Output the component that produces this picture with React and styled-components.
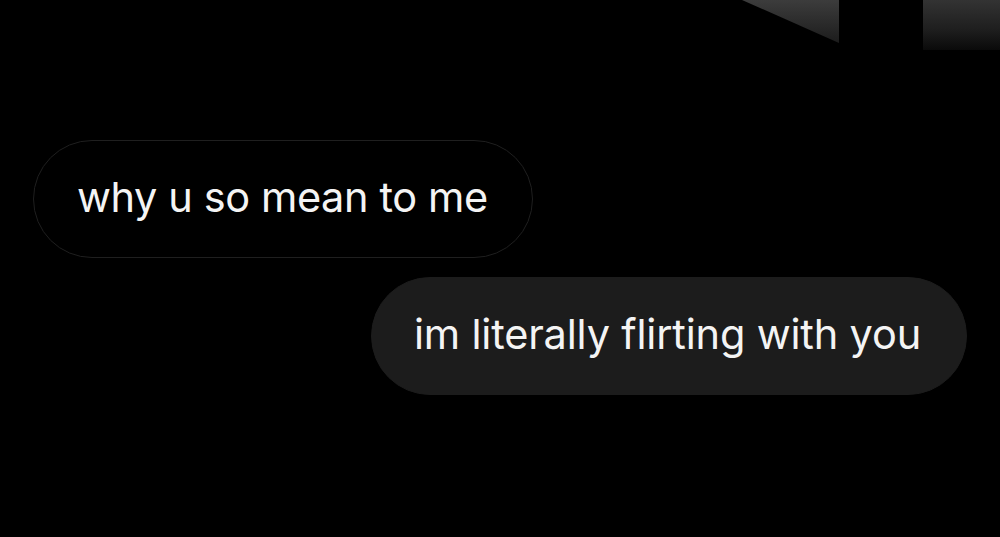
import styled, { createGlobalStyle } from "styled-components"

const GlobalStyle = createGlobalStyle`
  html, body {
    margin: 0;
    padding: 0;
    background: #000;
  }
`

const Screen = styled.div`
  width: 1000px;
  height: 537px;
  background: #000;
  overflow: hidden;
  display: flex;
  flex-direction: column;
  font-family: Inter, "Liberation Sans", sans-serif;
`

const TopStrip = styled.div`
  height: 50px;
  display: flex;
  justify-content: flex-end;
  align-items: flex-start;
  gap: 83px;
`

const Corner = styled.svg`
  display: block;
  flex: none;
`

const Tile = styled.div`
  width: 77px;
  height: 50px;
  flex: none;
  background: linear-gradient(180deg, #333 0%, #1e1e1e 60%, #0a0a0a 100%);
`

const Thread = styled.div`
  display: flex;
  flex-direction: column;
  gap: 19px;
  padding: 90px 33px 0 33px;
`

const Bubble = styled.div`
  align-self: ${(p) => (p.$mine ? "flex-end" : "flex-start")};
  height: 118px;
  box-sizing: border-box;
  border-radius: 59px;
  padding: ${(p) => (p.$mine ? "0 45px 4px 42px" : "0 44px 4px 43px")};
  display: flex;
  align-items: center;
  background: ${(p) => (p.$mine ? "#1c1c1c" : "#000")};
  border: 1px solid ${(p) => (p.$mine ? "#1c1c1c" : "#1f1f1f")};
  color: #f4f4f4;
  font-size: 41.5px;
  letter-spacing: ${(p) => (p.$mine ? "-0.18px" : "-0.4px")};
  white-space: nowrap;
`

export default function App() {
  return (
    <>
      <GlobalStyle />
      <Screen>
        <TopStrip>
          <Corner width="98" height="44" viewBox="0 0 98 44">
            <defs>
              <linearGradient id="cg" x1="0" y1="0" x2="0" y2="1">
                <stop offset="0" stopColor="#3c3c3c" />
                <stop offset="1" stopColor="#1c1c1c" />
              </linearGradient>
            </defs>
            <polygon points="0,0 97,0 97,43" fill="url(#cg)" />
          </Corner>
          <Tile />
        </TopStrip>
        <Thread>
          <Bubble>why u so mean to me</Bubble>
          <Bubble $mine>im literally flirting with you</Bubble>
        </Thread>
      </Screen>
    </>
  )
}
